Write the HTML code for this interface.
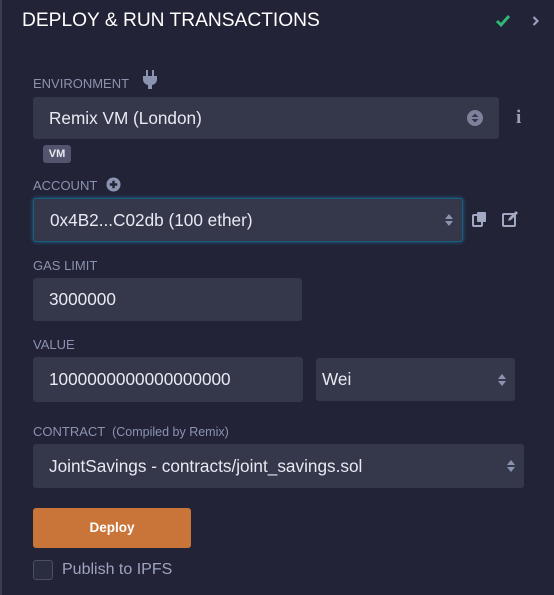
<!DOCTYPE html>
<html><head><style>
body{margin:0;width:554px;height:595px;background:#222336;font-family:"Liberation Sans",sans-serif;position:relative;overflow:hidden;color:#e2e4ee}
.a{position:absolute}
.lbl{position:absolute;left:33px;font-size:13px;color:#8c93b0;text-transform:uppercase}
.box{position:absolute;background:#35374b;border-radius:3px;font-size:17.2px;color:#e8e9f2;box-sizing:border-box;padding-left:16px;display:flex;align-items:center}
.arr{position:absolute;right:9px;top:50%;margin-top:-7px;width:8px;height:14px}
</style></head><body>
<div class="a" style="left:0;top:0;width:2px;height:595px;background:#3a3c52"></div>
<div class="a" style="left:22px;top:10px;font-size:19.2px;color:#fff">DEPLOY &amp; RUN TRANSACTIONS</div>
<svg class="a" style="left:495px;top:14px" width="16" height="14" viewBox="0 0 16 14"><path d="M2 7l4 4 8-9" stroke="#2fb775" stroke-width="3" fill="none"/></svg>
<svg class="a" style="left:532px;top:16px" width="7" height="10" viewBox="0 0 7 10"><path d="M1.5 1l4 4-4 4" stroke="#9aa0bb" stroke-width="2.2" fill="none"/></svg>

<div class="lbl" style="top:76px">Environment</div>
<svg class="a" style="left:142px;top:70px" width="16" height="20" viewBox="0 0 16 20"><rect x="4" y="0" width="2" height="6" fill="#8c93b0"/><rect x="10" y="0" width="2" height="6" fill="#8c93b0"/><path d="M1 6h14v4a6 6 0 0 1-5 5v4h-4v-4a6 6 0 0 1-5-5z" fill="#8c93b0"/></svg>
<div class="box" style="left:33px;top:97px;width:466px;height:42px">Remix VM (London)
<svg class="a" style="right:15px;top:12px" width="18" height="18" viewBox="0 0 18 18"><circle cx="9" cy="9" r="8" fill="#7d819b"/><path d="M5.5 8l3.5-3.5 3.5 3.5zM5.5 10l3.5 3.5 3.5-3.5z" fill="#35374b"/></svg></div>
<div class="a" style="left:516px;top:107px;font-size:19px;font-weight:bold;color:#9aa0bb;font-family:'Liberation Serif',serif">i</div>
<div class="a" style="left:43px;top:145px;width:28px;height:18px;background:#52556d;border-radius:3px;color:#e8e9f2;font-size:11px;font-weight:bold;text-align:center;line-height:18px">VM</div>

<div class="lbl" style="top:178px">Account</div>
<svg class="a" style="left:106px;top:177px" width="15" height="15" viewBox="0 0 16 16"><circle cx="8" cy="8" r="7.5" fill="#8c93b0"/><path d="M8 4v8M4 8h8" stroke="#222336" stroke-width="2.6"/></svg>
<div class="box" style="left:33px;top:198px;width:430px;height:44px;border:1px solid #1d5e80;box-shadow:0 0 4px #1a6b92">0x4B2...C02db (100 ether)
<svg class="arr" viewBox="0 0 8 14"><path d="M0 6l4-5 4 5zM0 8l4 5 4-5z" fill="#8c93b0"/></svg></div>
<svg class="a" style="left:472px;top:211px" width="16" height="16" viewBox="0 0 16 16"><rect x="1" y="4" width="9" height="11" rx="1" fill="none" stroke="#a2a8c2" stroke-width="2"/><rect x="5" y="1" width="9" height="10" rx="1" fill="#a2a8c2"/></svg>
<svg class="a" style="left:502px;top:211px" width="18" height="16" viewBox="0 0 18 16"><rect x="1" y="3" width="12" height="12" rx="1" fill="none" stroke="#a2a8c2" stroke-width="2"/><path d="M6 10l1-3 7-7 2 2-7 7z" fill="#a2a8c2"/></svg>

<div class="lbl" style="top:258px">Gas limit</div>
<div class="box" style="left:33px;top:278px;width:269px;height:43px">3000000</div>

<div class="lbl" style="top:337px">Value</div>
<div class="box" style="left:33px;top:357px;width:270px;height:45px">1000000000000000000</div>
<div class="box" style="left:316px;top:358px;width:199px;height:43px;padding-left:6px">Wei
<svg class="arr" viewBox="0 0 8 14"><path d="M0 6l4-5 4 5zM0 8l4 5 4-5z" fill="#8c93b0"/></svg></div>

<div class="lbl" style="top:424px">Contract <span style="text-transform:none;font-size:12.5px">&nbsp;(Compiled by Remix)</span></div>
<div class="box" style="left:33px;top:444px;width:491px;height:44px">JointSavings - contracts/joint_savings.sol
<svg class="arr" viewBox="0 0 8 14"><path d="M0 6l4-5 4 5zM0 8l4 5 4-5z" fill="#8c93b0"/></svg></div>

<div class="a" style="left:33px;top:508px;width:158px;height:40px;background:#c97539;border-radius:3px;color:#fff;font-size:13.5px;font-weight:bold;text-align:center;line-height:40px">Deploy</div>
<div class="a" style="left:33px;top:560px;width:18px;height:18px;border:1px solid #4a4d66;border-radius:3px;background:#2a2c40"></div>
<div class="a" style="left:62px;top:561px;font-size:16px;color:#9ea4c0">Publish to IPFS</div>
</body></html>
